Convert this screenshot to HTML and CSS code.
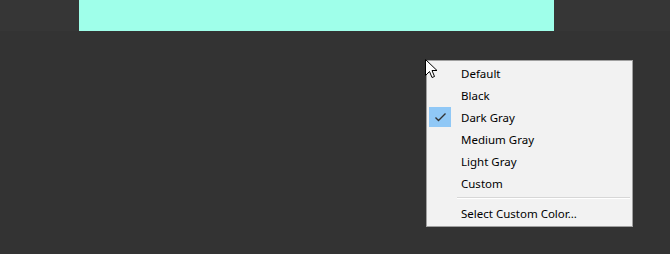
FILE: index.html
```html
<!DOCTYPE html>
<html>
<head>
<meta charset="utf-8">
<link rel="stylesheet" href="styles.css">
</head>
<body>
<div class="topbar"><div class="preview"></div></div>
<div class="menu">
  <div class="item"><span class="gutter"></span><span class="label">Default</span></div>
  <div class="item"><span class="gutter"></span><span class="label">Black</span></div>
  <div class="item"><span class="gutter checked"><svg width="22" height="20" viewBox="0 0 22 20"><path d="M6.5 10.5 L9.5 13.5 L16.5 6.5" fill="none" stroke="#333" stroke-width="1.4"/></svg></span><span class="label">Dark Gray</span></div>
  <div class="item"><span class="gutter"></span><span class="label">Medium Gray</span></div>
  <div class="item"><span class="gutter"></span><span class="label">Light Gray</span></div>
  <div class="item"><span class="gutter"></span><span class="label">Custom</span></div>
  <div class="sep"></div>
  <div class="item"><span class="gutter"></span><span class="label">Select Custom Color...</span></div>
</div>
<svg class="cursor" width="13" height="21" viewBox="0 0 13 21"><path d="M0.5 0.5 L0.5 16.5 L4.5 12.5 L7 18.5 L9.5 17.5 L7 11.5 L12 11.5 Z" fill="#fff" stroke="#000" stroke-width="1" stroke-linejoin="miter"/></svg>
</body>
</html>
```
FILE: styles.css
```css
html, body {
  margin: 0;
  padding: 0;
  background: #333333;
  width: 670px;
  height: 254px;
  overflow: hidden;
}
.topbar {
  height: 31px;
  background: #363636;
  display: flex;
}
.preview {
  margin-left: 79px;
  width: 475px;
  background: #9fffea;
}
.menu {
  position: absolute;
  left: 426px;
  top: 60px;
  width: 205px;
  box-sizing: content-box;
  background: #f2f2f2;
  border: 1px solid #a0a0a0;
  padding: 1px 0 2px 0;
  font-family: "Noto Sans", "Open Sans", sans-serif;
  font-size: 11.5px;
  color: #000;
}
.item {
  height: 22px;
  display: flex;
  align-items: center;
}
.gutter {
  width: 22px;
  height: 20px;
  margin-left: 2px;
  margin-right: 10px;
  flex: none;
}
.gutter.checked {
  background: #90c8f6;
}
.gutter svg { display: block; }
.label {
  line-height: 20px;
  padding-top: 2px;
  white-space: nowrap;
}
.sep {
  margin: 3px 2px 3px 30px;
  border-top: 1px solid #d7d7d7;
  border-bottom: 1px solid #ffffff;
  height: 0;
}
.cursor {
  position: absolute;
  left: 425px;
  top: 59px;
}
```
